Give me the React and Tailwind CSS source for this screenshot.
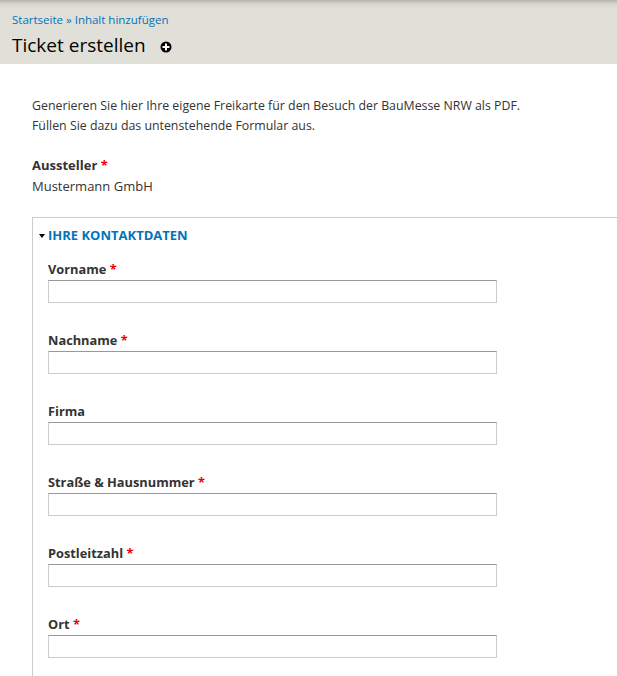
import React from "react";

const fields = [
  { label: "Vorname", req: true },
  { label: "Nachname", req: true },
  { label: "Firma", req: false },
  { label: "Straße & Hausnummer", req: true },
  { label: "Postleitzahl", req: true },
  { label: "Ort", req: true },
];

function PlusIcon() {
  return (
    <svg width="12" height="12" viewBox="0 0 12 12" className="block">
      <circle cx="6" cy="6" r="5.5" fill="#000" />
      <rect x="5" y="2.5" width="2" height="7" fill="#fff" />
      <rect x="2.5" y="5" width="7" height="2" fill="#fff" />
    </svg>
  );
}

export default function App() {
  return (
    <div
      className="w-[617px] h-[676px] overflow-hidden bg-white text-[#333]"
      style={{ fontFamily: '"Open Sans", "DejaVu Sans", sans-serif' }}
    >
      <div className="h-[64px] bg-[linear-gradient(to_bottom,#b5b5ae_0px,#d6d6cf_4px,#e0e0d8_9px,#e0e0d8_100%)] px-[12px] pt-[12px]">
        <div className="text-[11.5px] leading-[16px] text-[#0074bd]">
          Startseite » Inhalt hinzufügen
        </div>
        <div className="mt-[4px] flex items-center">
          <h1 className="text-[19px] leading-[26px] text-black font-normal">
            Ticket erstellen
          </h1>
          <span className="ml-[14px] mt-[3px]">
            <PlusIcon />
          </span>
        </div>
      </div>

      <div className="pl-[32px] pt-[32px] text-[12.35px]">
        <p className="leading-[20px]">
          Generieren Sie hier Ihre eigene Freikarte für den Besuch der BauMesse NRW als PDF.
          <br />
          Füllen Sie dazu das untenstehende Formular aus.
        </p>

        <div className="mt-[20px]">
          <div className="font-bold leading-[18px] text-[13px]">
            Aussteller <span className="text-[#e00]">*</span>
          </div>
          <div className="leading-[18px] mt-[3px] text-[13px]">Mustermann GmbH</div>
        </div>

        <div className="mt-[22px] border-t border-l border-[#ccc] w-[700px] pb-[20px]">
          <div className="flex items-center pl-[6px] pt-[9px] h-[27px]">
            <span className="w-0 h-0 border-l-[3.5px] border-r-[3.5px] border-t-[4px] border-l-transparent border-r-transparent border-t-black mr-[3px]" />
            <span className="text-[#0074bd] font-bold text-[13px] uppercase">Ihre Kontaktdaten</span>
          </div>
          <div className="pl-[15px] pt-[15px] flex flex-col gap-[28px]">
            {fields.map((f) => (
              <div key={f.label}>
                <div className="font-bold text-[12.8px] leading-[18px] h-[20px]">
                  {f.label}
                  {f.req && <span className="text-[#e00]"> *</span>}
                </div>
                <div className="w-[449px] h-[23px] border border-[#ccc] border-t-[#999] bg-white" />
              </div>
            ))}
          </div>
        </div>
      </div>
    </div>
  );
}
